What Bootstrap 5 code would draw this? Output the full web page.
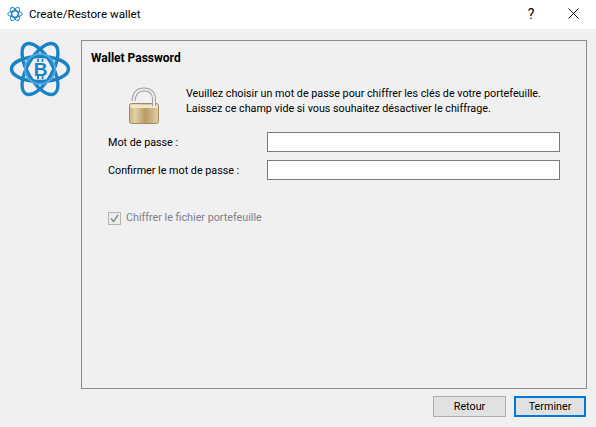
<!DOCTYPE html>
<html lang="fr">
<head>
    <title>Create/Restore wallet</title>
    <link href="https://cdn.jsdelivr.net/npm/bootstrap@5.3.0/dist/css/bootstrap.min.css" rel="stylesheet">
    <style>
        html, body { height: 427px; overflow: hidden; }
        body {
            background: #f0f0f0;
            color: #000;
            font-family: Roboto, "Open Sans", "Liberation Sans", sans-serif;
            font-size: 10.75px;
            line-height: 14px;
        }
        .win-title {
            height: 29px;
            background: #fff;
            font-size: 11.6px;
            padding-left: 7px;
            padding-bottom: 2px;
        }
        .win-title svg { margin-right: 6px; }
        .title-btn { text-align: center; }
        .help-btn { width: 46px; font-size: 14px; margin-right: 2px; }
        .close-btn { width: 40px; line-height: 0; }
        .wiz-body { height: 398px; padding: 11px 9px 10px 8px; }
        .logo-col { width: 64px; flex: none; margin-right: 9px; }
        .wiz-main { min-width: 0; }
        .wiz-panel {
            height: 349px;
            border: 1px solid #8a8a90;
            padding: 10px 26px 0 9px;
        }
        .wiz-heading { font-weight: 700; font-size: 12px; line-height: 14px; }
        .intro-row { margin-top: 15px; padding-left: 36px; height: 52px; }
        .lock-box { width: 59px; flex: none; line-height: 0; }
        .intro-text { padding-top: 6px; white-space: nowrap; line-height: 15px; }
        .field-row { height: 20px; padding-left: 17px; margin-bottom: 8px; }
        .field-row label { width: 159px; flex: none; padding-top: 1px; }
        .field-row input {
            width: 293px;
            height: 20px;
            border: 1px solid #7a7a7a;
            border-radius: 0;
            background: #fff;
            padding: 0 3px;
            outline: 0;
        }
        .encrypt-row { margin-top: 31px; padding-left: 17px; color: #7f7f88; }
        .encrypt-row .fake-check {
            width: 13px;
            height: 13px;
            border: 1px solid #b4b4b4;
            background: #ececec;
            margin-right: 5px;
            line-height: 0;
        }
        .wiz-btn {
            width: 73px;
            height: 21px;
            border: 1px solid #adadad;
            border-radius: 0;
            background: #e1e1e1;
            color: #000;
            font-size: 10.75px;
            line-height: 1;
            padding: 2px 0 0;
        }
        .wiz-btn.is-default { width: 72px; border: 2px solid #0078d7; }
        .wiz-footer { margin-top: 7px; gap: 8px; padding-right: 1px; }
    </style>
</head>
<body>
    <div class="win-title d-flex align-items-center">
        <svg width="16" height="16" viewBox="0 0 64 64">
            <g fill="none" stroke="#1c87c9" stroke-width="4">
                <ellipse cx="32" cy="32" rx="29" ry="12"/>
                <ellipse cx="32" cy="32" rx="29" ry="12" transform="rotate(60 32 32)"/>
                <ellipse cx="32" cy="32" rx="29" ry="12" transform="rotate(120 32 32)"/>
                <circle cx="32" cy="32" r="15"/>
            </g>
        </svg>
        <span class="flex-grow-1">Create/Restore wallet</span>
        <span class="title-btn help-btn">?</span>
        <span class="title-btn close-btn">
            <svg width="11" height="11" viewBox="0 0 11 11"><path d="M.5.5l10 10M10.5.5l-10 10" stroke="#111" fill="none"/></svg>
        </span>
    </div>

    <div class="wiz-body">
        <div class="d-flex">
            <div class="logo-col">
                <svg width="64" height="60" viewBox="0 0 64 60">
                    <g fill="none" stroke="#1a83c6" stroke-width="3.4">
                        <ellipse cx="32" cy="29" rx="28.5" ry="12.5"/>
                        <ellipse cx="32" cy="29" rx="28.5" ry="12.5" transform="rotate(60 32 29)"/>
                        <ellipse cx="32" cy="29" rx="28.5" ry="12.5" transform="rotate(120 32 29)"/>
                        <circle cx="32" cy="29" r="15" stroke="#52a8dd" stroke-width="2"/>
                    </g>
                    <text x="32.5" y="36" text-anchor="middle" font-family="Liberation Sans" font-weight="700" font-size="19" fill="#1a83c6">B</text>
                    <path d="M30 19v3M34.500 19v3M30 36v3M34.500 36v3" stroke="#1a83c6" stroke-width="1.800" fill="none"/>
                </svg>
            </div>
            <div class="wiz-main flex-grow-1">
                <div class="wiz-panel">
                    <div class="wiz-heading">Wallet Password</div>
                    <div class="intro-row d-flex">
                        <div class="lock-box">
                            <svg width="36" height="46" viewBox="0 0 36 46">
                                <defs>
                                    <linearGradient id="brass" x1="0" x2="1" y1="0" y2="0">
                                        <stop offset="0" stop-color="#cdb283"/>
                                        <stop offset=".2" stop-color="#e3d0a6"/>
                                        <stop offset=".55" stop-color="#b99a63"/>
                                        <stop offset="1" stop-color="#e2cfa6"/>
                                    </linearGradient>
                                </defs>
                                <rect x="2.500" y="23.500" width="29" height="20" rx="2" fill="url(#brass)" stroke="#a28b5e"/>
                                <rect x="3.500" y="24.500" width="27" height="3.500" fill="#efe6d0"/>
                                <!-- open shackle, tilted, left arm stops short -->
                                <path d="M6.500 21C7 13 11 9.500 17 9.500S27 13 27 19v7" fill="none" stroke="#9d9d9d" stroke-width="4"/>
                                <path d="M6.500 21C7 13 11 9.500 17 9.500S27 13 27 19v7" fill="none" stroke="#ececec" stroke-width="2"/>
                            </svg>
                        </div>
                        <div class="intro-text">
                            Veuillez choisir un mot de passe pour chiffrer les clés de votre portefeuille.<br>
                            Laissez ce champ vide si vous souhaitez désactiver le chiffrage.
                        </div>
                    </div>
                    <div class="field-row d-flex align-items-center">
                        <label for="pw1">Mot de passe :</label>
                        <input id="pw1" type="password">
                    </div>
                    <div class="field-row d-flex align-items-center">
                        <label for="pw2">Confirmer le mot de passe :</label>
                        <input id="pw2" type="password">
                    </div>
                    <div class="encrypt-row d-flex align-items-center">
                        <span class="fake-check">
                            <svg width="11" height="11" viewBox="0 0 11 11"><path d="M2 5.500l2.500 3L9 2" stroke="#8c8c8c" stroke-width="1.400" fill="none"/></svg>
                        </span>
                        <span>Chiffrer le fichier portefeuille</span>
                    </div>
                </div>
                <div class="wiz-footer d-flex justify-content-end">
                    <button type="button" class="btn wiz-btn">Retour</button>
                    <button type="button" class="btn wiz-btn is-default">Terminer</button>
                </div>
            </div>
        </div>
    </div>

    <script src="https://cdn.jsdelivr.net/npm/bootstrap@5.3.0/dist/js/bootstrap.bundle.min.js"></script>
</body>
</html>
